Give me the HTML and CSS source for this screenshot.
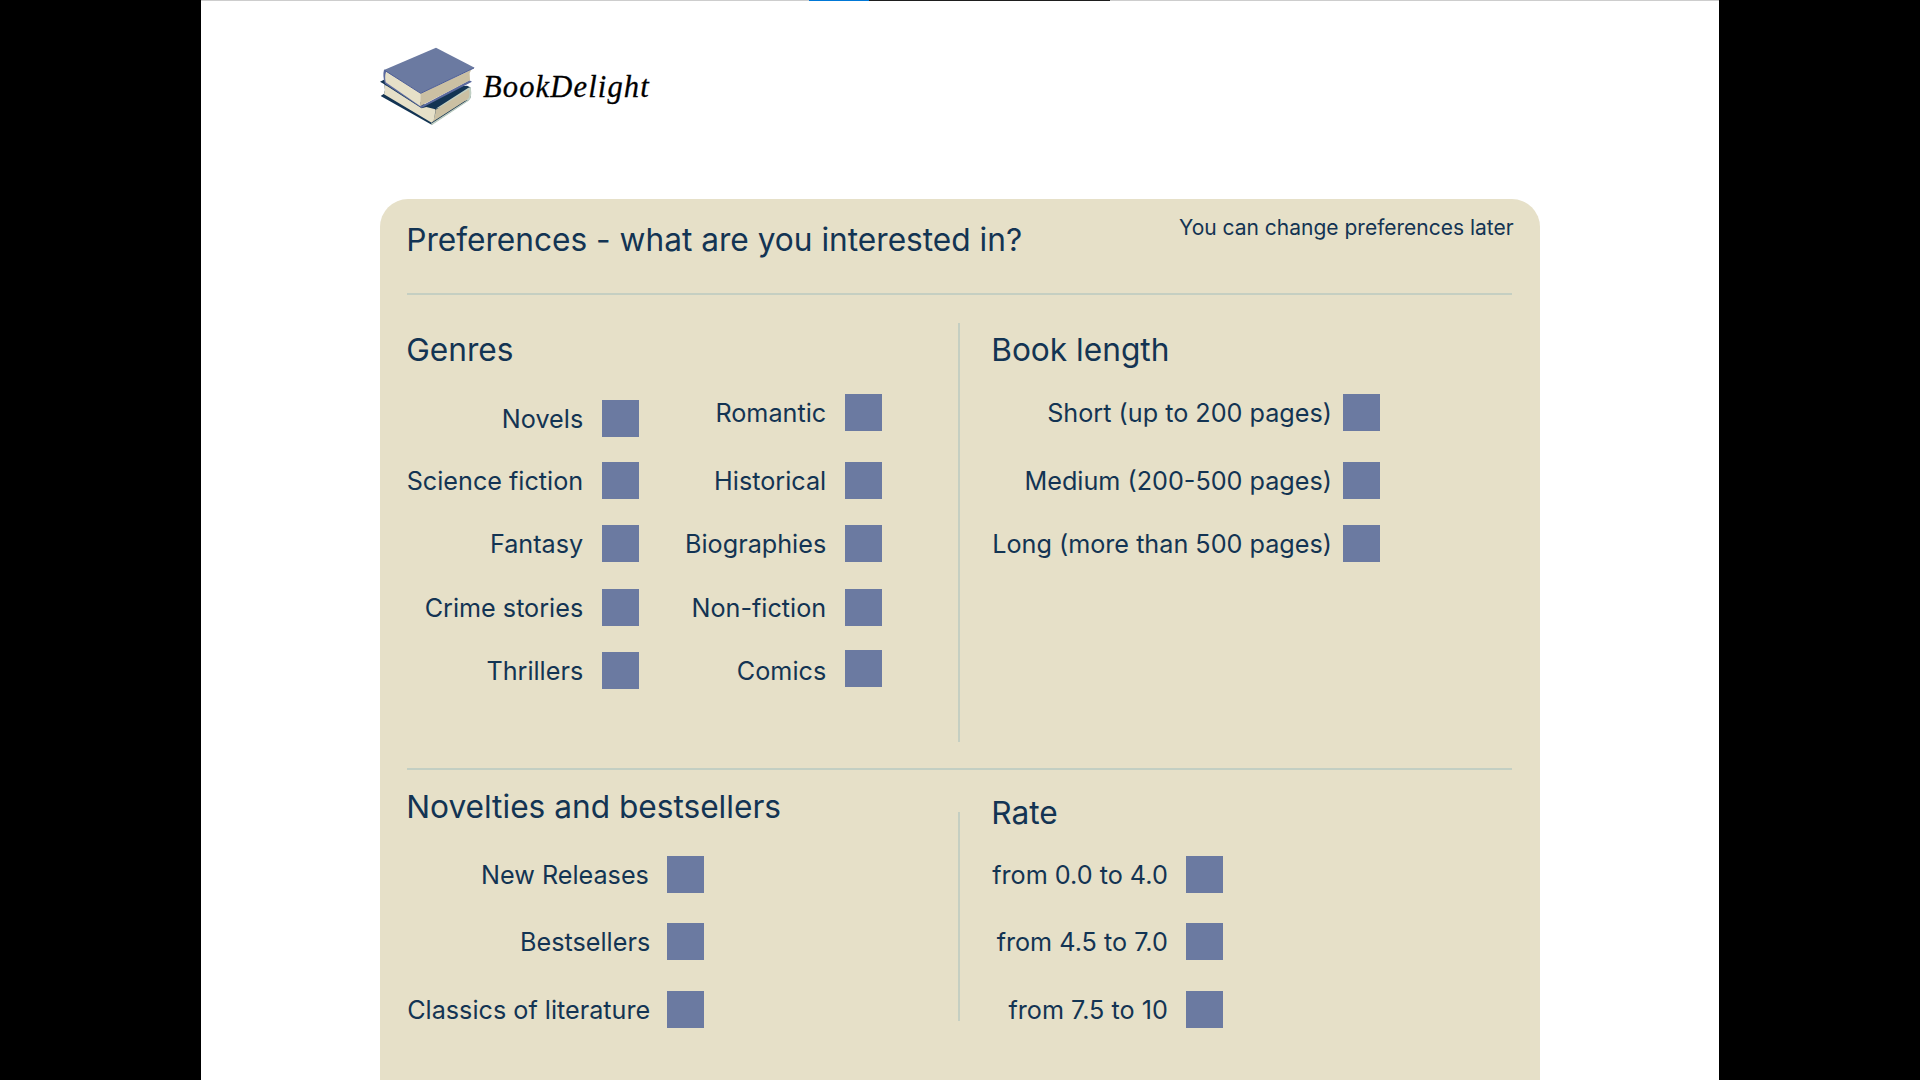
FILE: index.html
```html
<!DOCTYPE html>
<html lang="en">
<head>
<meta charset="utf-8">
<title>BookDelight</title>
<link rel="stylesheet" href="styles.css">
</head>
<body>
<div class="page">
  <div class="progress"><span class="progress-active"></span><span class="progress-rest"></span></div>
  <header class="brand">
    <svg class="brand-logo" viewBox="0 0 330 270" aria-hidden="true">
      <path fill="#133453" d="M15 125L30 118L50 135L150 194L256 139L276 137L286 142L288 170L281 181L170 254L17 168L27 161L30 150L28 133Z"/>
      <path fill="#c0cfc3" d="M182 206L279 144L287 141Q291 158 287 175L280 183L170 256L168 251L278 180Z"/>
      <path fill="#e6e0c8" d="M28 134L36 138L140 205L154 201L181 208L178 240L170 248L27 163Q32 150 28 134Z"/>
      <path fill="#cbc0a3" d="M181 210L282 148Q285 160 282 172L278 178L172 246Q182 230 181 210Z"/>
      <path fill="#5b6a9e" d="M27 89L40 91L140 197L283 121L291 125L140 204L30 131Q22 108 27 89Z"/>
      <path fill="#e6e0c8" d="M34 94L138 161L135 198L32 127Q28 108 34 94Z"/>
      <path fill="#cbc0a3" d="M137 160L289 89L284 99L285 121L135 199Z"/>
      <path fill="#6b7aa1" d="M183 23L299 83L137 160L27 90Z"/>
      <path fill="none" stroke="#4e5e96" stroke-width="3" d="M29 91L137 160L297 84"/>
    </svg>
    <span class="brand-name">BookDelight</span>
  </header>
  <main class="panel">
    <div class="panel-head">
      <h1 class="title">Preferences - what are you interested in?</h1>
      <p class="note">You can change preferences later</p>
    </div>
    <div class="row row-top">
      <section class="group">
        <h2 class="title">Genres</h2>
        <div class="columns">
          <ul class="options genres-a">
            <li class="option"><span>Novels</span><i class="box"></i></li>
            <li class="option"><span>Science fiction</span><i class="box"></i></li>
            <li class="option"><span>Fantasy</span><i class="box"></i></li>
            <li class="option"><span>Crime stories</span><i class="box"></i></li>
            <li class="option"><span>Thrillers</span><i class="box"></i></li>
          </ul>
          <ul class="options genres-b">
            <li class="option"><span>Romantic</span><i class="box"></i></li>
            <li class="option"><span>Historical</span><i class="box"></i></li>
            <li class="option"><span>Biographies</span><i class="box"></i></li>
            <li class="option"><span>Non-fiction</span><i class="box"></i></li>
            <li class="option"><span>Comics</span><i class="box"></i></li>
          </ul>
        </div>
      </section>
      <div class="divider"></div>
      <section class="group">
        <h2 class="title">Book length</h2>
        <ul class="options lengths">
          <li class="option"><span>Short (up to 200 pages)</span><i class="box"></i></li>
          <li class="option"><span>Medium (200-500 pages)</span><i class="box"></i></li>
          <li class="option"><span>Long (more than 500 pages)</span><i class="box"></i></li>
        </ul>
      </section>
    </div>
    <div class="row row-bottom">
      <section class="group novelties">
        <h2 class="title">Novelties and bestsellers</h2>
        <ul class="options">
          <li class="option"><span>New Releases</span><i class="box"></i></li>
          <li class="option"><span>Bestsellers</span><i class="box"></i></li>
          <li class="option"><span>Classics of literature</span><i class="box"></i></li>
        </ul>
      </section>
      <div class="divider"></div>
      <section class="group rate">
        <h2 class="title">Rate</h2>
        <ul class="options">
          <li class="option"><span>from 0.0 to 4.0</span><i class="box"></i></li>
          <li class="option"><span>from 4.5 to 7.0</span><i class="box"></i></li>
          <li class="option"><span>from 7.5 to 10</span><i class="box"></i></li>
        </ul>
      </section>
    </div>
  </main>
</div>
</body>
</html>
```

FILE: styles.css
```css
* { box-sizing: border-box; }
body { margin: 0; height: 1080px; overflow: hidden; background: #000; font-family: Inter, "Liberation Sans", sans-serif; color: #133453; }
h1, h2, p, ul { margin: 0; padding: 0; font-weight: 400; list-style: none; }

.page { width: 1518px; height: 1080px; margin: 0 auto; background: #fff; overflow: hidden; }
.progress { display: flex; height: 1px; padding-left: 608px; background: #cdcdcd; }
.progress-active { width: 60px; background: #0078d7; }
.progress-rest { width: 241px; background: #1e1e1e; }

.brand { display: flex; height: 197.5px; padding: 39px 0 0 174px; }
.brand-logo { width: 110px; height: 90px; flex: none; }
.brand-name { font: italic 30.5px/40px "Liberation Serif", serif; color: #000; letter-spacing: 1.15px; margin-left: -2px; padding-top: 27px; white-space: nowrap; -webkit-text-stroke: 0.3px #000; }

.panel { width: 1160px; height: 881.5px; margin-left: 178.7px; padding: 0 27.5px; background: #e6e0c8; border-radius: 28px 28px 0 0; }
.panel-head { display: flex; justify-content: space-between; height: 96.5px; padding-top: 22px; border-bottom: 2px solid #c5cfc2; }
.title { font-size: 31.65px; line-height: 38px; margin-left: -1px; white-space: nowrap; }
.note { font-size: 21px; line-height: 25px; white-space: nowrap; margin: -6px -1.5px 0 0; }

.row { display: grid; grid-template-columns: 551px 2px 1fr; }
.row-top { height: 475px; border-bottom: 2px solid #c3cfc3; }
.divider { background: #c5cfc2; }
.row-top .divider { margin: 28px 0 26px; }
.row-bottom .divider { height: 209px; margin-top: 42px; }
.group { padding-top: 36px; }
.divider + .group { padding-left: 32px; }
.columns { display: flex; }

.options { display: flex; flex-direction: column; gap: 26.15px; margin-top: 25px; width: fit-content; }
.option { display: flex; justify-content: flex-end; gap: 19px; height: 37px; font-size: 25.2px; line-height: 38.2px; white-space: nowrap; }
.box { flex: none; width: 37px; height: 37px; background: #6b7aa1; }
.genres-a { width: 232px; margin-top: 31px; }
.genres-a .option:first-child { margin-bottom: -0.9px; }
.genres-b { width: 243px; }
.genres-b .option:first-child, .lengths .option:first-child { margin-bottom: 5.1px; }
.genres-b .option:last-child .box { margin-top: -2px; }
.lengths .option { gap: 11.5px; }
.novelties { padding-top: 18px; }
.rate { padding-top: 24px; }
.row-bottom .options { gap: 30.5px; }
.novelties .options { margin: 29.5px 0 0; }
.novelties .option { gap: 17.2px; }
.novelties .option:first-child { gap: 18.5px; }
.rate .options { margin-top: 23.5px; }
.rate .option { gap: 18.4px; }
```
